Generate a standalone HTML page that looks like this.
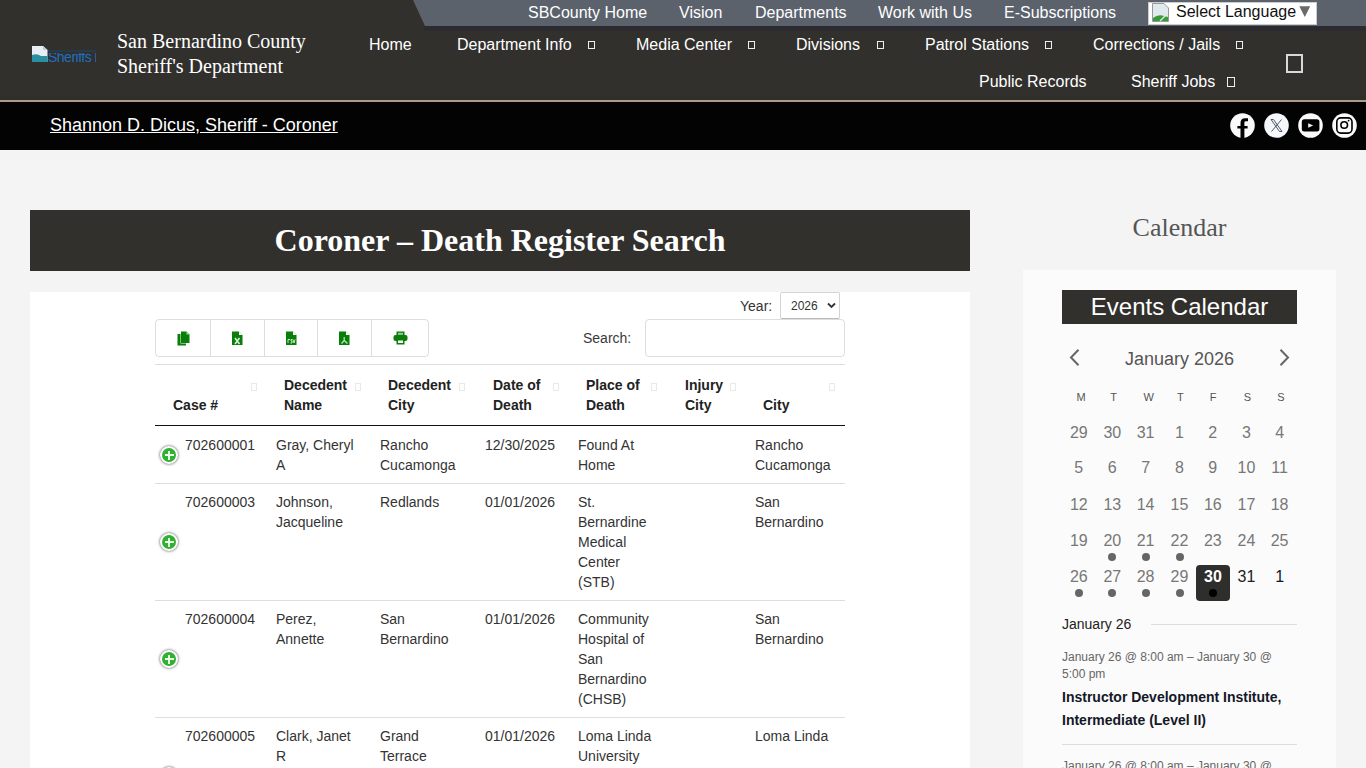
<!DOCTYPE html>
<html><head><meta charset="utf-8">
<style>
*{margin:0;padding:0;box-sizing:border-box}
html,body{width:1366px;height:768px;overflow:hidden;background:#f4f4f4;font-family:"Liberation Sans",sans-serif}
div,span{position:absolute;white-space:nowrap}
#hdr{left:0;top:0;width:1366px;height:100px;background:#31302c}
#topbar{left:0;top:0;width:1366px;height:26px;background:#5b626c;clip-path:polygon(413px 0,1366px 0,1366px 26px,425px 26px)}
.tl{top:3px;color:#fff;font-size:16px;line-height:19px}
#tan{left:0;top:100px;width:1366px;height:2px;background:#ad9a89}
#blk{left:0;top:102px;width:1366px;height:48px;background:#030303}
.nav{color:#fff;font-size:16px;line-height:19px}
.sq{width:7px;height:8px;border:1px solid #eee}
.logo{left:117px;top:29px;color:#fff;font-family:"Liberation Serif",serif;font-size:20px;line-height:25px}
#lang{left:1148px;top:2px;width:169px;height:23px;background:#fff;border:1px solid #ccc}
#title{left:30px;top:210px;width:940px;height:61px;background:#31302c;color:#fff;font-family:"Liberation Serif",serif;font-weight:bold;font-size:32px;text-align:center;line-height:61px}
#content{left:30px;top:292px;width:940px;height:476px;background:#fff}
.btn{top:319px;height:38px;border:1px solid #ddd}
.th{font-weight:bold;font-size:14px;line-height:20px;color:#222}
.td{font-size:14px;line-height:20px;color:#333}
.sort{width:6px;height:8px;border:1px solid #e9e9e9}
.hr{left:155px;width:690px;height:1px;background:#ddd}
.plus{left:160px;width:18px;height:18px;border-radius:50%;background:#31b131;border:2px solid #fff;box-shadow:0 0 3px #444}
.plus:before{content:"";position:absolute;left:2.5px;top:6.2px;width:9px;height:1.6px;background:#e8ffe8}
.plus:after{content:"";position:absolute;left:6.2px;top:2.5px;width:1.6px;height:9px;background:#e8ffe8}
#cal{left:1023px;top:270px;width:313px;height:498px;background:#fbfbfb}
.dh{font-size:11px;color:#555;width:30px;text-align:center;top:390px;line-height:14px}
.dn{font-size:16px;color:#777;width:30px;text-align:center;line-height:19px}
.dot{width:8px;height:8px;border-radius:50%;background:#666}
</style></head><body>
<div id="hdr"></div>
<div id="topbar"></div>
<div style="left:424px;top:26px;width:942px;height:5px;background:#2c2b2f"></div>
<div class="tl" style="left:528px">SBCounty Home</div>
<div class="tl" style="left:679px">Vision</div>
<div class="tl" style="left:755px">Departments</div>
<div class="tl" style="left:878px">Work with Us</div>
<div class="tl" style="left:1004px">E-Subscriptions</div>
<div id="lang"></div>
<div class="tl" style="left:1176px;top:2px;color:#111">Select Language</div>
<div style="left:0;top:96px;width:1366px;height:4px;background:#2d2f2b"></div>
<div id="tan"></div>
<div id="blk"></div>
<div class="logo">San Bernardino County<br>Sheriff's Department</div>
<div class="nav" style="left:369px;top:35px">Home</div>
<div class="nav" style="left:457px;top:35px">Department Info</div>
<div class="sq" style="left:588px;top:41px"></div>
<div class="nav" style="left:636px;top:35px">Media Center</div>
<div class="sq" style="left:748px;top:41px"></div>
<div class="nav" style="left:796px;top:35px">Divisions</div>
<div class="sq" style="left:877px;top:41px"></div>
<div class="nav" style="left:925px;top:35px">Patrol Stations</div>
<div class="sq" style="left:1045px;top:41px"></div>
<div class="nav" style="left:1093px;top:35px">Corrections / Jails</div>
<div class="sq" style="left:1236px;top:41px"></div>
<div class="nav" style="left:979px;top:72px">Public Records</div>
<div class="nav" style="left:1131px;top:72px">Sheriff Jobs</div>
<div class="sq" style="left:1227px;top:77px;width:8px;height:10px"></div>
<div class="sq" style="left:1286px;top:54px;width:17px;height:19px;border:2px solid #d8d8d8"></div>
<div style="left:50px;top:115px;color:#fff;font-size:18px;line-height:21px;text-decoration:underline">Shannon D. Dicus, Sheriff - Coroner</div>

<div id="title">Coroner – Death Register Search</div>
<div id="content"></div>
<div class="td" style="left:740px;top:296px">Year:</div>
<div style="left:780px;top:292px;width:60px;height:27px;border:1px solid #d4d4d4;border-bottom-color:#bbb;border-radius:2px;font-size:12px;color:#333;padding:6px 0 0 10px">2026</div>
<div class="td" style="left:583px;top:328px;color:#3a3a3a">Search:</div>
<div style="left:645px;top:319px;width:200px;height:38px;border:1px solid #ddd;border-radius:4px"></div>
<div style="left:155px;top:319px;width:274px;height:38px;border:1px solid #ddd;border-radius:4px"></div>
<div style="left:210px;top:320px;width:1px;height:36px;background:#ddd"></div>
<div style="left:264px;top:320px;width:1px;height:36px;background:#ddd"></div>
<div style="left:317px;top:320px;width:1px;height:36px;background:#ddd"></div>
<div style="left:371px;top:320px;width:1px;height:36px;background:#ddd"></div>
<div class="hr" style="top:364px"></div>

<div class="th" style="left:173px;top:395px">Case #</div>
<div class="th" style="left:284px;top:375px">Decedent<br>Name</div>
<div class="th" style="left:388px;top:375px">Decedent<br>City</div>
<div class="th" style="left:493px;top:375px">Date of<br>Death</div>
<div class="th" style="left:586px;top:375px">Place of<br>Death</div>
<div class="th" style="left:685px;top:375px">Injury<br>City</div>
<div class="th" style="left:763px;top:395px">City</div>
<div class="sort" style="left:251px;top:383px"></div>
<div class="sort" style="left:355px;top:383px"></div>
<div class="sort" style="left:459px;top:383px"></div>
<div class="sort" style="left:553px;top:383px"></div>
<div class="sort" style="left:651px;top:383px"></div>
<div class="sort" style="left:730px;top:383px"></div>
<div class="sort" style="left:829px;top:383px"></div>
<div style="left:155px;top:425px;width:690px;height:1px;background:#111"></div>

<div class="plus" style="top:446px"></div>
<div class="td" style="left:185px;top:435px">702600001</div>
<div class="td" style="left:276px;top:435px">Gray, Cheryl<br>A</div>
<div class="td" style="left:380px;top:435px">Rancho<br>Cucamonga</div>
<div class="td" style="left:485px;top:435px">12/30/2025</div>
<div class="td" style="left:578px;top:435px">Found At<br>Home</div>
<div class="td" style="left:755px;top:435px">Rancho<br>Cucamonga</div>
<div class="hr" style="top:483px"></div>

<div class="plus" style="top:533px"></div>
<div class="td" style="left:185px;top:492px">702600003</div>
<div class="td" style="left:276px;top:492px">Johnson,<br>Jacqueline</div>
<div class="td" style="left:380px;top:492px">Redlands</div>
<div class="td" style="left:485px;top:492px">01/01/2026</div>
<div class="td" style="left:578px;top:492px">St.<br>Bernardine<br>Medical<br>Center<br>(STB)</div>
<div class="td" style="left:755px;top:492px">San<br>Bernardino</div>
<div class="hr" style="top:600px"></div>

<div class="plus" style="top:650px"></div>
<div class="td" style="left:185px;top:609px">702600004</div>
<div class="td" style="left:276px;top:609px">Perez,<br>Annette</div>
<div class="td" style="left:380px;top:609px">San<br>Bernardino</div>
<div class="td" style="left:485px;top:609px">01/01/2026</div>
<div class="td" style="left:578px;top:609px">Community<br>Hospital of<br>San<br>Bernardino<br>(CHSB)</div>
<div class="td" style="left:755px;top:609px">San<br>Bernardino</div>
<div class="hr" style="top:717px"></div>

<div class="plus" style="top:767px"></div>
<div class="td" style="left:185px;top:726px">702600005</div>
<div class="td" style="left:276px;top:726px">Clark, Janet<br>R</div>
<div class="td" style="left:380px;top:726px">Grand<br>Terrace</div>
<div class="td" style="left:485px;top:726px">01/01/2026</div>
<div class="td" style="left:578px;top:726px">Loma Linda<br>University</div>
<div class="td" style="left:755px;top:726px">Loma Linda</div>

<!-- sidebar -->
<div style="left:1023px;top:213px;width:313px;text-align:center;font-family:'Liberation Serif',serif;font-size:26px;line-height:30px;color:#555">Calendar</div>
<div id="cal"></div>
<div style="left:1062px;top:290px;width:235px;height:34px;background:#31302c;color:#fff;font-size:24px;line-height:34px;text-align:center">Events Calendar</div>
<div style="left:1062px;top:349px;width:235px;text-align:center;font-size:18px;line-height:21px;color:#555">January 2026</div>
<div class="dh" style="left:1066.1px">M</div>
<div class="dh" style="left:1098.6px">T</div>
<div class="dh" style="left:1133.7px">W</div>
<div class="dh" style="left:1165.3px">T</div>
<div class="dh" style="left:1198.2px">F</div>
<div class="dh" style="left:1232.5px">S</div>
<div class="dh" style="left:1266.0px">S</div>
<div class="dn" style="left:1063.8px;top:423.4px">29</div>
<div class="dn" style="left:1097.3px;top:423.4px">30</div>
<div class="dn" style="left:1130.6px;top:423.4px">31</div>
<div class="dn" style="left:1164.5px;top:423.4px">1</div>
<div class="dn" style="left:1197.8px;top:423.4px">2</div>
<div class="dn" style="left:1231.5px;top:423.4px">3</div>
<div class="dn" style="left:1264.6px;top:423.4px">4</div>
<div class="dn" style="left:1063.8px;top:458.4px">5</div>
<div class="dn" style="left:1097.3px;top:458.4px">6</div>
<div class="dn" style="left:1130.6px;top:458.4px">7</div>
<div class="dn" style="left:1164.5px;top:458.4px">8</div>
<div class="dn" style="left:1197.8px;top:458.4px">9</div>
<div class="dn" style="left:1231.5px;top:458.4px">10</div>
<div class="dn" style="left:1264.6px;top:458.4px">11</div>
<div class="dn" style="left:1063.8px;top:494.9px">12</div>
<div class="dn" style="left:1097.3px;top:494.9px">13</div>
<div class="dn" style="left:1130.6px;top:494.9px">14</div>
<div class="dn" style="left:1164.5px;top:494.9px">15</div>
<div class="dn" style="left:1197.8px;top:494.9px">16</div>
<div class="dn" style="left:1231.5px;top:494.9px">17</div>
<div class="dn" style="left:1264.6px;top:494.9px">18</div>
<div class="dn" style="left:1063.8px;top:531.1px">19</div>
<div class="dn" style="left:1097.3px;top:531.1px">20</div>
<div class="dn" style="left:1130.6px;top:531.1px">21</div>
<div class="dn" style="left:1164.5px;top:531.1px">22</div>
<div class="dn" style="left:1197.8px;top:531.1px">23</div>
<div class="dn" style="left:1231.5px;top:531.1px">24</div>
<div class="dn" style="left:1264.6px;top:531.1px">25</div>
<div class="dn" style="left:1063.8px;top:566.9px">26</div>
<div class="dn" style="left:1097.3px;top:566.9px">27</div>
<div class="dn" style="left:1130.6px;top:566.9px">28</div>
<div class="dn" style="left:1164.5px;top:566.9px">29</div>
<div class="dn" style="left:1231.5px;top:566.9px;color:#222">31</div>
<div class="dn" style="left:1264.6px;top:566.9px;color:#141827">1</div>
<div class="dot" style="left:1108.3px;top:553px"></div>
<div class="dot" style="left:1141.6px;top:553px"></div>
<div class="dot" style="left:1175.5px;top:553px"></div>
<div class="dot" style="left:1074.8px;top:589px"></div>
<div class="dot" style="left:1108.3px;top:589px"></div>
<div class="dot" style="left:1141.6px;top:589px"></div>
<div class="dot" style="left:1175.5px;top:589px"></div>
<div style="left:1069px;top:349px;width:12px;height:17px"><svg width="12" height="17" viewBox="0 0 12 17"><path d="M9.5 0.8 L2 8.5 L9.5 16.2" fill="none" stroke="#666" stroke-width="2"/></svg></div>
<div style="left:1279px;top:349px;width:12px;height:17px"><svg width="12" height="17" viewBox="0 0 12 17"><path d="M1.5 0.8 L9 8.5 L1.5 16.2" fill="none" stroke="#666" stroke-width="2"/></svg></div>
<div style="left:1196px;top:565px;width:34px;height:36px;background:#2e2e2c;border-radius:4px"></div>
<div style="left:1196px;top:566.9px;width:34px;text-align:center;font-size:16px;line-height:19px;font-weight:bold;color:#fff">30</div>
<div class="dot" style="left:1208.8px;top:589px;background:#000"></div>
<div style="left:1062px;top:616px;font-size:14px;line-height:17px;color:#222">January 26</div>
<div style="left:1151px;top:624px;width:146px;height:1px;background:#ddd"></div>
<div style="left:1062px;top:649px;font-size:12px;line-height:16.5px;color:#666">January 26 @ 8:00 am – January 30 @<br>5:00 pm</div>
<div style="left:1062px;top:686px;font-size:14px;line-height:23px;font-weight:bold;color:#141827">Instructor Development Institute,<br>Intermediate (Level II)</div>
<div style="left:1062px;top:744px;width:235px;height:1px;background:#ddd"></div>
<div style="left:1062px;top:758px;font-size:12px;line-height:16.5px;color:#666">January 26 @ 8:00 am – January 30 @</div>

<!-- button icons -->
<svg style="position:absolute;left:176.5px;top:330.5px" width="13" height="15" viewBox="0 0 13 15">
<path d="M0.5 3 H3.5 V12.5 H9 V14.5 H0.5 Z" fill="#0b7d0b"/>
<path d="M4 0.5 H9.5 L12.5 3.5 V12 H4 Z" fill="#0b7d0b"/>
<path d="M9.5 0.5 V3.5 H12.5" fill="#9be59b" />
</svg>
<svg style="position:absolute;left:231.5px;top:330.5px" width="11" height="15" viewBox="0 0 11 15">
<path d="M0 0.5 H7 L10.5 4 V14 H0 Z" fill="#0b7d0b"/>
<path d="M7 0.5 V4 H10.5" fill="#fff"/>
<path d="M3 7 L7.5 13 M7.5 7 L3 13" stroke="#d6f5d6" stroke-width="1.6"/>
</svg>
<svg style="position:absolute;left:285.5px;top:330.5px" width="11" height="15" viewBox="0 0 11 15">
<path d="M0 0.5 H7 L10.5 4 V14 H0 Z" fill="#0b7d0b"/>
<path d="M7 0.5 V4 H10.5" fill="#fff"/>
<path d="M2 12 V8.5 H4 M4.5 12 H6 V10 H5 V8.5 H6.5 M7 8.5 L8 12 L9 8.5" stroke="#d6f5d6" stroke-width="0.9" fill="none"/>
</svg>
<svg style="position:absolute;left:338.5px;top:330.5px" width="11" height="15" viewBox="0 0 11 15">
<path d="M0 0.5 H7 L10.5 4 V14 H0 Z" fill="#0b7d0b"/>
<path d="M7 0.5 V4 H10.5" fill="#fff"/>
<path d="M5.2 6 V9.5 L2.5 12.5 M5.2 9.5 L8.5 12.5" stroke="#b8efb8" stroke-width="1.2" fill="none"/>
</svg>
<svg style="position:absolute;left:393px;top:331px" width="15" height="14" viewBox="0 0 15 14">
<path d="M3.5 0.5 H11.5 V4 H3.5 Z" fill="#0b7d0b"/>
<rect x="0.5" y="4" width="14" height="6" rx="2" fill="#0b7d0b"/>
<path d="M3.5 8 H11.5 V13.5 H3.5 Z" fill="#0b7d0b"/>
<rect x="5" y="9.5" width="5" height="2.5" fill="#fff"/>
<rect x="5" y="1.8" width="5" height="2" fill="#fff" opacity="0.6"/>
</svg>
<!-- select chevron -->
<svg style="position:absolute;left:826.5px;top:302px" width="9" height="7" viewBox="0 0 9 7"><path d="M1 1.5 L4.5 5 L8 1.5" fill="none" stroke="#333" stroke-width="1.8"/></svg>
<!-- logo broken image -->
<svg style="position:absolute;left:32px;top:46px" width="16" height="16" viewBox="0 0 16 16">
<path d="M0 0 H11 L15.5 4 V16 H0 Z" fill="#e8ecf4"/>
<path d="M0 9 Q5 7 9 10 L15.5 10 V16 H0 Z" fill="#2a8fa0"/>
<path d="M11 0 V4 H15.5" fill="#bcc"/>
</svg>
<div style="left:48px;top:50px;width:48px;height:2px;background:#263a4a"></div><div style="left:48px;top:53px;width:48px;height:9px;overflow:hidden"><div style="left:0;top:-4px;font-size:14px;line-height:16px;color:#1f6fc0;letter-spacing:-0.5px">Sheriffs logo</div></div>
<!-- lang icon -->
<svg style="position:absolute;left:1152px;top:3px" width="17" height="19" viewBox="0 0 17 19">
<path d="M0.5 0.5 H12 L16.5 5 V18.5 H0.5 Z" fill="#dfe9ee" stroke="#999" stroke-width="1"/>
<path d="M1 18 V15 Q6 11 12 13 L16 14 V18 Z" fill="#3a9a3a"/>
<path d="M8 18 L14 12" stroke="#ccf2cc" stroke-width="1.5"/>
</svg>
<svg style="position:absolute;left:1298.5px;top:6px" width="12" height="12" viewBox="0 0 12 12"><path d="M0.3 0.3 H11.2 L5.8 11 Z" fill="#6a6a6a"/></svg>
<!-- social -->
<svg style="position:absolute;left:1230px;top:113px" width="25" height="25" viewBox="0 0 25 25">
<circle cx="12.5" cy="12.5" r="12.3" fill="#fafafa"/>
<path d="M10.5 25 V15.6 H7.4 V12.9 H10.5 V10 Q10.5 5.2 15 5.2 H18 V8.2 H15.8 Q14.4 8.2 14.4 9.6 V12.9 H17.6 V15.6 H14.4 V25 Z" fill="#000"/>
</svg>
<svg style="position:absolute;left:1264px;top:113px" width="25" height="25" viewBox="0 0 25 25">
<circle cx="12.5" cy="12.5" r="12.3" fill="#f5f7fa"/>
<path d="M7 6.5 H9.5 L18 18.5 H15.5 Z" fill="none" stroke="#3a4a5a" stroke-width="0.9"/>
<path d="M17.5 6.5 L7.5 18.5" stroke="#3a4a5a" stroke-width="0.9"/>
</svg>
<svg style="position:absolute;left:1298px;top:113px" width="25" height="25" viewBox="0 0 25 25">
<circle cx="12.5" cy="12.5" r="12.3" fill="#fafafa"/>
<rect x="3.8" y="6.2" width="17.6" height="12.2" rx="2.5" fill="#000"/>
<path d="M10.2 10.2 L15.2 12.5 L10.2 14.8 Z" fill="#eee"/>
</svg>
<svg style="position:absolute;left:1332px;top:113px" width="25" height="25" viewBox="0 0 25 25">
<circle cx="12.5" cy="12.5" r="12.3" fill="#fafafa"/>
<rect x="4.8" y="4.9" width="15.2" height="15.2" rx="4" fill="none" stroke="#000" stroke-width="1.6"/>
<circle cx="12.2" cy="12" r="3.3" fill="none" stroke="#000" stroke-width="1.6"/>
<circle cx="16.6" cy="7.6" r="0.9" fill="#000"/>
</svg>
</body></html>
